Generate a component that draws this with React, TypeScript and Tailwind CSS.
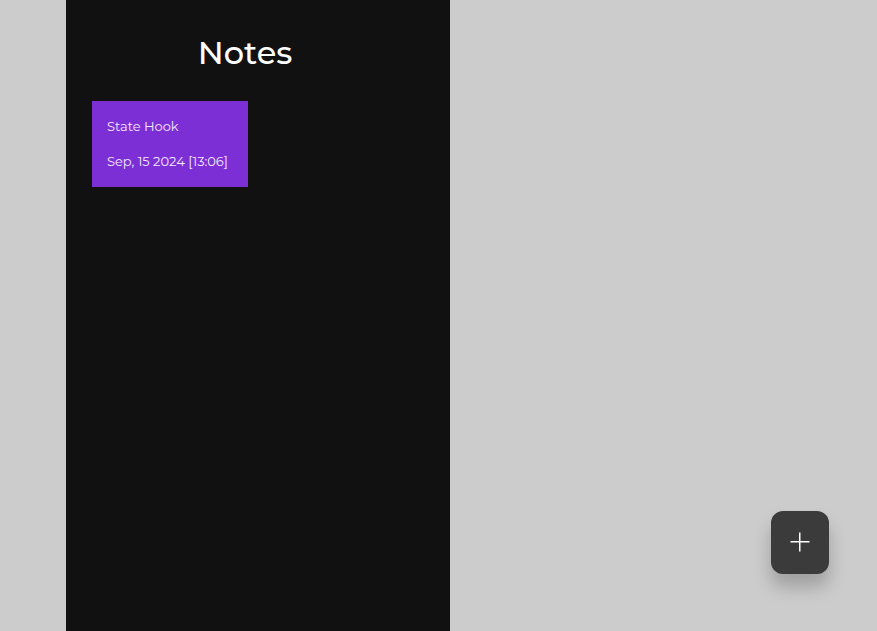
export default function App() {
  return (
    <div className="relative flex min-h-screen bg-[#cccccc] pl-[66px] font-['Montserrat','Inter',sans-serif]">
      <main className="w-96 bg-[#111111] px-[26px] pt-8">
        <h1 className="pr-[26px] text-center text-[32px] leading-[42px] font-medium text-white">Notes</h1>
        <article className="mt-[27px] flex w-[156px] flex-col gap-[15px] bg-[#7d2fd6] px-[15px] pt-[15px] pb-4 text-[13px] leading-5 text-[#f5e9ff]">
          <h2>State Hook</h2>
          <time dateTime="2024-09-15T13:06" className="whitespace-nowrap">Sep, 15 2024 [13:06]</time>
        </article>
      </main>
      <button
        type="button"
        aria-label="Add note"
        className="fixed right-12 bottom-[57px] flex h-[63px] w-[58px] items-center justify-center rounded-xl bg-[#3b3b3b] pb-px text-white shadow-[0_13px_18px_rgba(0,0,0,0.22)]"
      >
        <svg className="size-5" viewBox="0 0 20 20" fill="none" stroke="currentColor" strokeWidth="1.5" aria-hidden="true">
          <path d="M9.75 0.5v19M0.5 9.75h19" />
        </svg>
      </button>
    </div>
  );
}
